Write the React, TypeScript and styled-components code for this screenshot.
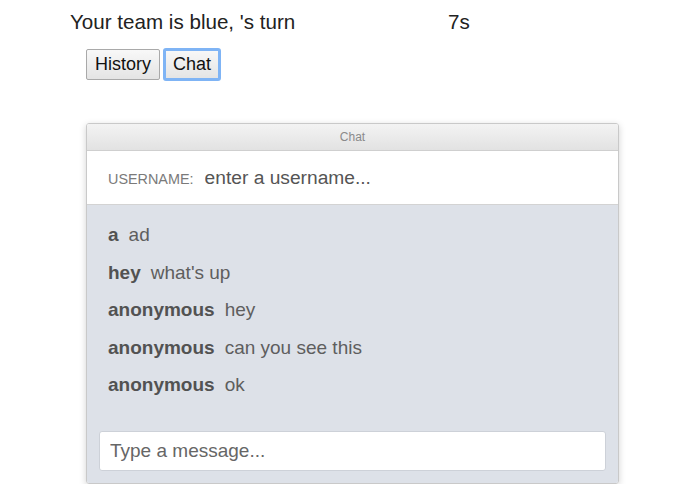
import React from 'react';
import styled, { createGlobalStyle } from 'styled-components';

const GlobalStyle = createGlobalStyle`
  body {
    margin: 0;
    background: #ffffff;
    font-family: "Liberation Sans", Arial, sans-serif;
    color: #222;
  }
`;

const Page = styled.div`
  padding: 10px 0 0 70px;
`;

const StatusRow = styled.div`
  display: flex;
  font-size: 20.6px;
  line-height: 24px;
  color: #222;
`;

const TurnText = styled.span`
  width: 378px;
`;

const TabRow = styled.div`
  display: flex;
  gap: 4px;
  margin: 15px 0 0 16px;
`;

const TabButton = styled.button<{ $active?: boolean }>`
  height: 31px;
  padding: 0 8px;
  font-family: "Liberation Sans", Arial, sans-serif;
  font-size: 18px;
  color: #111;
  background: linear-gradient(#f8f8f8, #e4e4e4);
  border: 1px solid #a9a9a9;
  border-radius: 2px;
  outline: ${p => (p.$active ? '3px solid #7fb4f5' : 'none')};
  outline-offset: -2px;
  box-shadow: ${p => (p.$active ? '0 0 0 1px #5b9be8 inset' : 'none')};
`;

const ChatPanel = styled.div`
  width: 531px;
  margin: 43px 0 0 16px;
  border: 1px solid #c9c9c9;
  border-radius: 3px;
  box-shadow: 0 2px 7px rgba(0, 0, 0, 0.18);
  overflow: hidden;
`;

const TitleBar = styled.div`
  height: 26px;
  line-height: 26px;
  text-align: center;
  font-size: 12px;
  color: #8a8a8a;
  background: linear-gradient(#f3f3f3, #e2e2e2);
  border-bottom: 1px solid #cfcfcf;
`;

const UserBar = styled.div`
  display: flex;
  align-items: center;
  gap: 11px;
  height: 53px;
  padding: 0 21px;
  background: #ffffff;
  border-bottom: 1px solid #d3d3d3;
`;

const UserLabel = styled.span`
  font-size: 14.4px;
  color: #7a7a7a;
  text-transform: uppercase;
  padding-top: 2px;
`;

const UserInput = styled.input`
  flex: 1;
  border: none;
  outline: none;
  font-family: "Liberation Sans", Arial, sans-serif;
  font-size: 19.2px;
  color: #444;
  padding: 0;
  &::placeholder {
    color: #555;
  }
`;

const MessagesArea = styled.div`
  background: #dde1e8;
`;

const MessageList = styled.div`
  height: 203px;
  padding: 11px 21px 0;
`;

const MessageRow = styled.div`
  height: 37.5px;
  line-height: 37.5px;
  font-size: 19px;
  color: #5e5e5e;
`;

const Sender = styled.span`
  font-weight: bold;
  color: #525252;
  margin-right: 10px;
`;

const ComposeBar = styled.div`
  padding: 12px;
`;

const ComposeInput = styled.input`
  display: block;
  box-sizing: border-box;
  width: 100%;
  height: 40px;
  padding: 0 10px;
  border: 1px solid #cdd1d8;
  border-radius: 3px;
  background: #fff;
  font-family: "Liberation Sans", Arial, sans-serif;
  font-size: 19px;
  outline: none;
  &::placeholder {
    color: #666;
  }
`;

const messages = [
  { from: 'a', text: 'ad' },
  { from: 'hey', text: "what's up" },
  { from: 'anonymous', text: 'hey' },
  { from: 'anonymous', text: 'can you see this' },
  { from: 'anonymous', text: 'ok' },
];

const App: React.FC = () => {
  return (
    <>
      <GlobalStyle />
      <Page>
        <StatusRow>
          <TurnText>Your team is blue, 's turn</TurnText>
          <span>7s</span>
        </StatusRow>
        <TabRow>
          <TabButton>History</TabButton>
          <TabButton $active>Chat</TabButton>
        </TabRow>
        <ChatPanel>
          <TitleBar>Chat</TitleBar>
          <UserBar>
            <UserLabel>Username:</UserLabel>
            <UserInput placeholder="enter a username..." />
          </UserBar>
          <MessagesArea>
            <MessageList>
              {messages.map((m, i) => (
                <MessageRow key={i}>
                  <Sender>{m.from}</Sender>
                  {m.text}
                </MessageRow>
              ))}
            </MessageList>
            <ComposeBar>
              <ComposeInput placeholder="Type a message..." />
            </ComposeBar>
          </MessagesArea>
        </ChatPanel>
      </Page>
    </>
  );
};

export default App;
